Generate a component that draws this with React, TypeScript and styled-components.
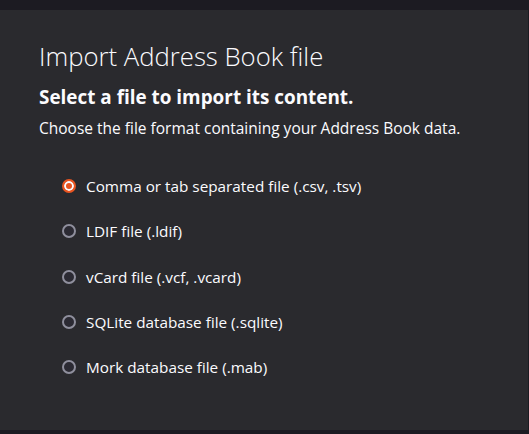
import React, { useState } from "react";
import styled, { createGlobalStyle } from "styled-components";

const GlobalStyle = createGlobalStyle`
  html, body {
    margin: 0;
    padding: 0;
    background: #1c1b22;
  }
  body {
    font-family: "Open Sans", "Noto Sans", sans-serif;
    color: #fbfbfe;
  }
`;

const Page = styled.div`
  display: flex;
  flex-direction: column;
  width: 529px;
  height: 434px;
  background: #1c1b22;
`;

const TopBar = styled.div`
  height: 10px;
  background: #1c1b22;
`;

const Panel = styled.section`
  height: 420px;
  box-sizing: border-box;
  padding: 30px 0 0 39px;
  background: #2a2a2e;
  border-right: 1px solid #1c1b22;
`;

const Title = styled.h1`
  margin: 0;
  font-size: 25.7px;
  font-weight: 300;
  line-height: 34px;
`;

const Subtitle = styled.h2`
  margin: 11px 0 0;
  font-size: 18.9px;
  font-weight: 700;
  line-height: 24px;
`;

const Description = styled.p`
  margin: 9px 0 0;
  font-size: 15.5px;
  line-height: 20px;
`;

const Options = styled.div`
  display: flex;
  flex-direction: column;
  gap: 25.25px;
  margin: 38px 0 0 23px;
`;

const Option = styled.label`
  display: flex;
  align-items: center;
  gap: 10px;
  height: 20px;
  font-size: 15.3px;
  cursor: pointer;
`;

const Radio = styled.span<{ $checked: boolean }>`
  box-sizing: border-box;
  width: 14px;
  height: 14px;
  border-radius: 50%;
  flex: none;
  border: 2px solid ${(p) => (p.$checked ? "#e95420" : "#8f8f9d")};
  background: ${(p) => (p.$checked ? "#e95420" : "#2b2a33")};
  box-shadow: ${(p) => (p.$checked ? "inset 0 0 0 2px #fbfbfe" : "none")};
`;

const formats = [
  "Comma or tab separated file (.csv, .tsv)",
  "LDIF file (.ldif)",
  "vCard file (.vcf, .vcard)",
  "SQLite database file (.sqlite)",
  "Mork database file (.mab)",
];

export default function App() {
  const [selected, setSelected] = useState(0);

  return (
    <>
      <GlobalStyle />
      <Page>
        <TopBar />
        <Panel>
          <Title>Import Address Book file</Title>
          <Subtitle>Select a file to import its content.</Subtitle>
          <Description>
            Choose the file format containing your Address Book data.
          </Description>
          <Options>
            {formats.map((f, i) => (
              <Option key={f} onClick={() => setSelected(i)}>
                <Radio $checked={selected === i} />
                {f}
              </Option>
            ))}
          </Options>
        </Panel>
      </Page>
    </>
  );
}
